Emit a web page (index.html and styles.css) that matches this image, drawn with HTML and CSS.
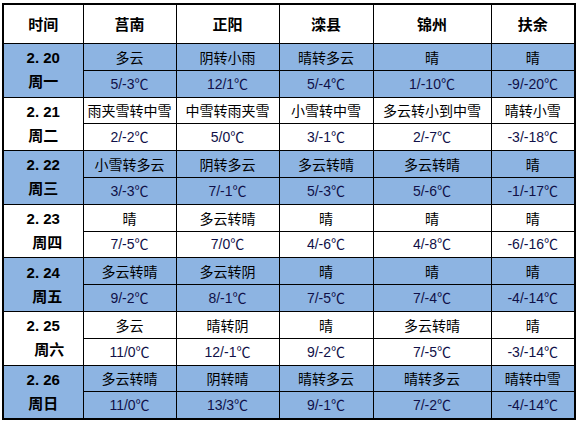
FILE: index.html
```html
<!DOCTYPE html>
<html lang="zh">
<head>
<meta charset="utf-8">
<link rel="stylesheet" href="styles.css">
</head>
<body>
<table class="wx">
<colgroup>
<col class="c0"><col class="c1"><col class="c2"><col class="c3"><col class="c4"><col class="c5">
</colgroup>
<thead>
<tr class="head"><th>时间</th><th>莒南</th><th>正阳</th><th>滦县</th><th>锦州</th><th>扶余</th></tr>
</thead>
<tbody>
<tr class="blue"><td class="date" rowspan="2">2. 20<br>周一</td><td>多云</td><td>阴转小雨</td><td>晴转多云</td><td>晴</td><td>晴</td></tr>
<tr class="blue t"><td>5/-3℃</td><td>12/1℃</td><td>5/-4℃</td><td>1/-10℃</td><td>-9/-20℃</td></tr>

<tr class="white"><td class="date" rowspan="2">2. 21<br>周二</td><td>雨夹雪转中雪</td><td>中雪转雨夹雪</td><td>小雪转中雪</td><td>多云转小到中雪</td><td>晴转小雪</td></tr>
<tr class="white t"><td>2/-2℃</td><td>5/0℃</td><td>3/-1℃</td><td>2/-7℃</td><td>-3/-18℃</td></tr>

<tr class="blue"><td class="date" rowspan="2">2. 22<br>周三</td><td>小雪转多云</td><td>阴转多云</td><td>多云转晴</td><td>多云转晴</td><td>晴</td></tr>
<tr class="blue t"><td>3/-3℃</td><td>7/-1℃</td><td>5/-3℃</td><td>5/-6℃</td><td>-1/-17℃</td></tr>

<tr class="white"><td class="date" rowspan="2">2. 23<br><span class="ind">周四</span></td><td>晴</td><td>多云转晴</td><td>晴</td><td>晴</td><td>晴</td></tr>
<tr class="white t"><td>7/-5℃</td><td>7/0℃</td><td>4/-6℃</td><td>4/-8℃</td><td>-6/-16℃</td></tr>

<tr class="blue"><td class="date" rowspan="2">2. 24<br><span class="ind">周五</span></td><td>多云转晴</td><td>多云转阴</td><td>晴</td><td>晴</td><td>晴</td></tr>
<tr class="blue t"><td>9/-2℃</td><td>8/-1℃</td><td>7/-5℃</td><td>7/-4℃</td><td>-4/-14℃</td></tr>

<tr class="white"><td class="date" rowspan="2">2. 25<br><span class="ind2">周六</span></td><td>多云</td><td>晴转阴</td><td>晴</td><td>多云转晴</td><td>晴</td></tr>
<tr class="white t"><td>11/0℃</td><td>12/-1℃</td><td>9/-2℃</td><td>7/-5℃</td><td>-3/-14℃</td></tr>

<tr class="blue"><td class="date" rowspan="2">2. 26<br>周日</td><td>多云转晴</td><td>阴转晴</td><td>晴转多云</td><td>晴转多云</td><td>晴转中雪</td></tr>
<tr class="blue t"><td>11/0℃</td><td>13/3℃</td><td>9/-1℃</td><td>7/-2℃</td><td>-4/-14℃</td></tr>
</tbody>
</table>
</body>
</html>
```
FILE: styles.css
```css
html, body {
  margin: 0;
  padding: 0;
  background: #ffffff;
}
body {
  padding: 3px 0 0 2px;
  font-family: "Noto Sans CJK SC", "Liberation Sans", sans-serif;
}
.wx {
  border-collapse: collapse;
  table-layout: fixed;
  width: 573px;
  border: 2px solid #000;
}
.c0 { width: 80px; }
.c1 { width: 93px; }
.c2 { width: 103px; }
.c3 { width: 94px; }
.c4 { width: 118px; }
.c5 { width: 84px; }
.wx th, .wx td {
  border: 1px solid #000;
  padding: 0;
  text-align: center;
  vertical-align: middle;
  overflow: hidden;
  white-space: nowrap;
}
.head th {
  height: 38px;
  font-size: 15px;
  font-weight: bold;
  color: #000;
  line-height: 20px;
}
tbody tr {
  height: 26.8px;
}
.wx td {
  font-size: 14px;
  line-height: 18px;
  color: #000;
}
.blue td { background: #8db4e2; }
.white td { background: #ffffff; }
.t td {
  font-family: "Liberation Sans", "Noto Sans CJK SC", sans-serif;
  font-size: 14px;
  color: #101048;
}
.wx td.date {
  font-family: "Liberation Sans", "Noto Sans CJK SC", sans-serif;
  font-weight: bold;
  font-size: 15px;
  line-height: 24px;
  color: #000;
}
.ind { padding-left: 8px; }
.ind2 { padding-left: 12px; }
```
